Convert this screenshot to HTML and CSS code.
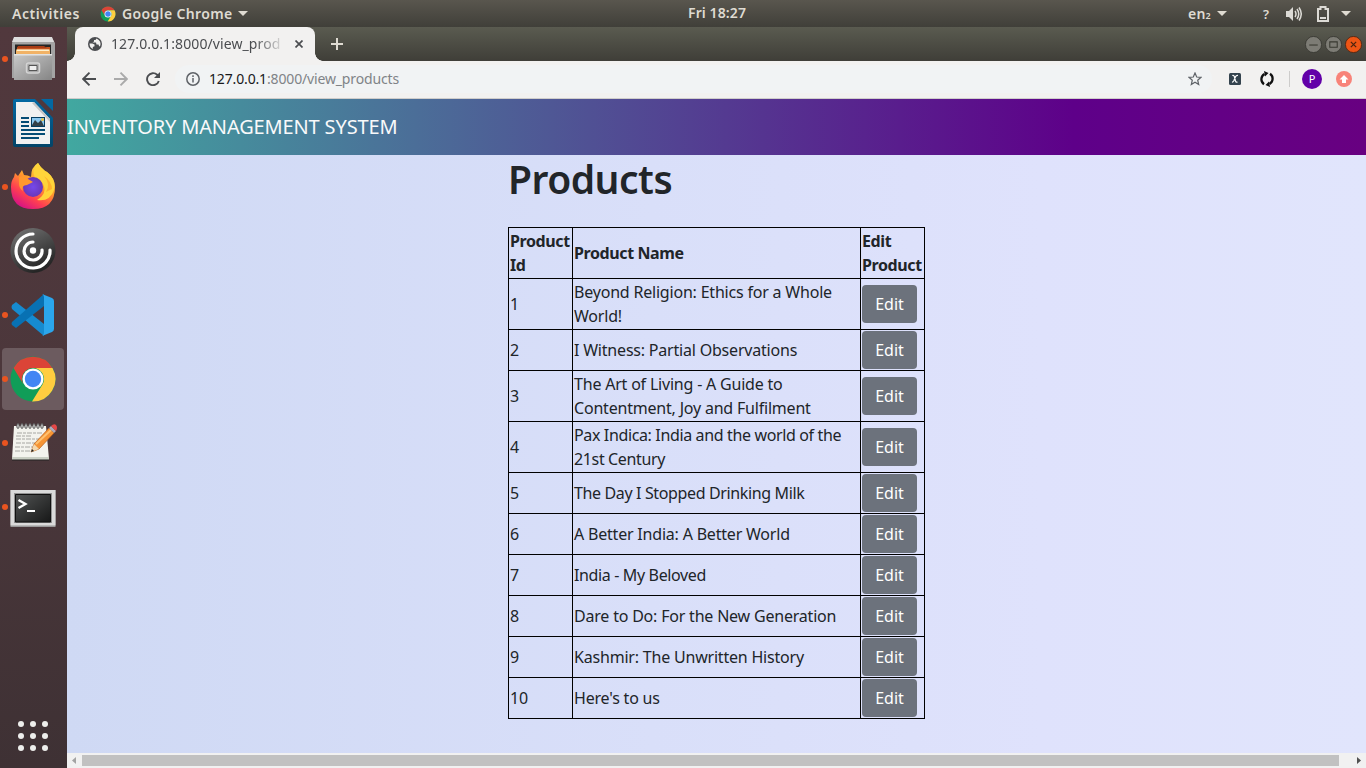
FILE: index.html
```html
<!DOCTYPE html>
<html lang="en">
<head>
<meta charset="utf-8">
<title>Products</title>
<link rel="stylesheet" href="styles.css">
</head>
<body>
<div class="topbar">
  <span class="activities">Activities</span>
  <svg class="app-icon" width="16" height="16" viewBox="0 0 48 48"><use href="#chrome"/></svg>
  <span class="app-name">Google Chrome</span>
  <i class="caret"></i>
  <span class="clock">Fri 18:27</span>
  <div class="tray">
    <span class="lang">en<span class="sub">2</span></span><i class="caret"></i>
    <span class="help">?</span>
    <svg class="volume" width="16" height="16" viewBox="0 0 16 16"><path d="M0 5h3l4-4v14l-4-4H0z" fill="#dcdad5"/><path d="M9 5q2 3 0 6M11 3q3.500 5 0 10M13 1.500q4.500 6.500 0 13" fill="none" stroke="#dcdad5" stroke-width="1.500"/></svg>
    <svg class="battery" width="12" height="16" viewBox="0 0 12 16"><path d="M1 3h2.500V1h5v2H11v12H1z" fill="none" stroke="#dcdad5" stroke-width="2"/><path d="M3 11h6v2H3z" fill="#dcdad5"/></svg>
    <i class="caret"></i>
  </div>
</div>
<div class="desktop">
  <nav class="dock">
    <div class="app running">
      <svg width="48" height="48" viewBox="0 0 48 48"><defs><linearGradient id="steel" x2="1" y2="1"><stop stop-color="#c9c9c9"/><stop offset="1" stop-color="#858585"/></linearGradient></defs><path d="M5 3h38l3 5v35H3V8z" fill="#a4a4a4"/><path d="M5 2h38l2 5H3z" fill="#dedede"/><path d="M6 9.500h36v10H6z" fill="#252525"/><path d="M8 12h33v7H8z" fill="#c3531f"/><path d="M9 11h26l3 2H8z" fill="#a83d16"/><path d="M7 14.500h34V19H7z" fill="#f1b266"/><path d="M8 14.500h32v1.500H8z" fill="#fff1cf"/><path d="M5 19h38v26H5z" fill="url(#steel)"/><path d="M5 19h38v1.500H5z" fill="#e2e2e2"/><rect x="17.500" y="28" width="13" height="10" rx="2" fill="#aaa" stroke="#d4d4d4" stroke-width="1.500"/><path d="M20 30.500h8v5h-8z" fill="#eee" stroke="#555"/></svg>
    </div>
    <div class="app">
      <svg width="48" height="48" viewBox="0 0 48 48"><defs><linearGradient id="writer" x2="0" y2="1"><stop stop-color="#0369a3"/><stop offset="1" stop-color="#024468"/></linearGradient></defs><path d="M6 0h20l18 19v27q0 2-2 2H6q-2 0-2-2V2q0-2 2-2z" fill="url(#writer)"/><path d="M7 3h18l16 17v25H7z" fill="#f1f1f1"/><path d="M25 3l16 17v3L23 4z" fill="#c5c5c5"/><path d="M32 0h12v12z" fill="#0369a3"/><path d="M12 19h8M12 23h8M12 27h8M12 31h24M12 35h24M12 39h18" stroke="#044c75" stroke-width="2"/><path d="M22 18h14v10H22z" fill="#063e61"/><path d="M23 19h12v8H23z" fill="#8cc8ef"/><path d="M23 26l3-5 3 3 3-3 3 6H23z" fill="#344047"/><circle cx="33.500" cy="20.500" r="1.500" fill="#e9c240"/></svg>
    </div>
    <div class="app running">
      <svg width="48" height="48" viewBox="0 1 48 48"><defs><linearGradient id="flame" x1=".85" y1=".1" x2=".3" y2="1"><stop stop-color="#ffef48"/><stop offset=".4" stop-color="#ff9d2b"/><stop offset=".72" stop-color="#ff4050"/><stop offset="1" stop-color="#d71384"/></linearGradient><radialGradient id="globe"><stop stop-color="#7548ec"/><stop offset="1" stop-color="#6938b8"/></radialGradient></defs><path d="M29 1q2 4 7 8l2 1q8 6 8 15 0 22-22 22T2 25q0-6 3-10l1-4 3 3 4-6 2 5q4 0 7 2 0-10 7-14z" fill="url(#flame)"/><path d="M29 1q2 4 7 8l2 1q9 7 7 18-4 12-17 10 11-7 6-16-3-5-8-6-4-7 3-15z" fill="#ffd43a"/><path d="M35 14q7 8 2 16l6-3q0-7-8-13z" fill="#ffb02d"/><circle cx="24" cy="25" r="10" fill="url(#globe)"/><path d="M10 15q6-3 9 2l5 3-6 3q-6 0-4 6-4-3-4-7z" fill="#ff982d"/></svg>
    </div>
    <div class="app">
      <svg width="48" height="48" viewBox="0 1 48 48"><defs><linearGradient id="disc" x2=".5" y2="1"><stop stop-color="#777"/><stop offset="1" stop-color="#252525"/></linearGradient></defs><circle cx="24" cy="24.500" r="22.500" fill="url(#disc)"/><g fill="none" stroke="#fff" stroke-width="3.200" stroke-linecap="round"><path d="M24 8a17 17 0 1 0 17 16"/><path d="M24 16a9 9 0 1 0 9 8"/></g><circle cx="24" cy="24.500" r="3.200" fill="#fff"/></svg>
    </div>
    <div class="app running">
      <svg width="48" height="48" viewBox="0 0 48 48"><path d="M3 14l4-3 28 22v12L3 18q-1-2 0-4z" fill="#168bd0"/><path d="M3 31q-1 2 0 3l4 3L35 15V3z" fill="#0871b3"/><path d="M33 3l10 4q2 1 2 3v28q0 2-2 3l-10 4q2-1 2-3V6q0-2-2-3z" fill="#2ba6ec"/></svg>
    </div>
    <div class="app running active">
      <svg width="48" height="48" viewBox="0 0 48 48"><g id="chrome"><circle cx="24" cy="24" r="22.500" fill="#109d58"/><path d="M4.500 13A22.500 22.500 0 0 1 43.500 13H24A11 11 0 0 0 14.500 29.500z" fill="#db4437"/><path d="M43.500 13A22.500 22.500 0 0 1 23 46.500l10.500-17A11 11 0 0 0 24 13z" fill="#ffcd40"/><circle cx="24" cy="24" r="10.500" fill="#fff"/><circle cx="24" cy="24" r="8.200" fill="#4285f4"/></g></svg>
    </div>
    <div class="app running">
      <svg width="48" height="48" viewBox="0 1 48 48"><path d="M5 8h32l3 33H3z" fill="#f3f3ee"/><path d="M3 39h37v3H3z" fill="#c9cec3"/><path d="M3 42h37" stroke="#222"/><path d="M8 15h26M7 18h16M7 21h23M7 25h25M6 29h18M6 33h15" stroke="#a6a6a2" stroke-dasharray="5 1 3 1"/><g fill="#ddd" stroke="#555"><ellipse cx="9" cy="8" rx="1.200" ry="2.500"/><ellipse cx="13" cy="8" rx="1.200" ry="2.500"/><ellipse cx="17" cy="8" rx="1.200" ry="2.500"/><ellipse cx="21" cy="8" rx="1.200" ry="2.500"/><ellipse cx="25" cy="8" rx="1.200" ry="2.500"/><ellipse cx="29" cy="8" rx="1.200" ry="2.500"/><ellipse cx="33" cy="8" rx="1.200" ry="2.500"/></g><path d="M22 34l3-8 15-16 5 5-15 16z" fill="#f59435" stroke="#b75f1a" stroke-width=".7"/><path d="M27 26l15-14" stroke="#ffc16f" stroke-width="2"/><path d="M22 34l3-8 5 5z" fill="#f3d9b0"/><path d="M22 34l1-3 2 2z" fill="#222"/><path d="M40 10l2-2 5 5-2 2z" fill="#aab"/><path d="M42 8q3-3 5-1t0 6z" fill="#e54848"/></svg>
    </div>
    <div class="app running">
      <svg width="48" height="48" viewBox="0 0 48 48"><defs><linearGradient id="screen" x2="1" y2="1"><stop stop-color="#515353"/><stop offset="1" stop-color="#171818"/></linearGradient></defs><path d="M1.500 7h45v37h-45z" fill="#999"/><path d="M1.500 7h45v35.500h-45z" fill="#dadada"/><path d="M5 10h38v30H5z" fill="#929292"/><path d="M6.500 11.500h35v27.500h-35z" fill="url(#screen)" stroke="#111"/><path d="M9.500 17l7 4-7 4" fill="none" stroke="#fff" stroke-width="2.300"/><path d="M18 28h8" stroke="#fff" stroke-width="2"/></svg>
    </div>
    <svg class="grid-icon" width="30" height="30" viewBox="0 0 30 30" fill="#eeeeec"><circle cx="3" cy="3" r="3"/><circle cx="15" cy="3" r="3"/><circle cx="27" cy="3" r="3"/><circle cx="3" cy="15" r="3"/><circle cx="15" cy="15" r="3"/><circle cx="27" cy="15" r="3"/><circle cx="3" cy="27" r="3"/><circle cx="15" cy="27" r="3"/><circle cx="27" cy="27" r="3"/></svg>
  </nav>
  <div class="browser">
    <header class="tabstrip">
      <div class="tab">
        <svg width="14" height="14" viewBox="0 0 14 14"><circle cx="7" cy="7" r="7" fill="#4b4d50"/><path d="M1.500 6.500h2.700l2.300 1v1.800l-1.700.7v2Q1.500 10.500 1.500 6.500zM8.500 1.600L7.500 3H6v1.500L4.500 5.500H8l.5 2h2l.5 1.500 1 .5Q14 4 8.500 1.600z" fill="#f2f1f0"/></svg>
        <span class="tab-title">127.0.0.1:8000/view_prod</span>
        <svg class="close" width="8" height="8" viewBox="0 0 8 8"><path d="M.5.500l7 7M7.500.500l-7 7" stroke="#4b4d50" stroke-width="1.700"/></svg>
      </div>
      <svg class="new-tab" width="12" height="12" viewBox="0 0 12 12"><path d="M6 0v12M0 6h12" stroke="#dfdbd2" stroke-width="2"/></svg>
      <div class="window-buttons">
        <svg width="17" height="17" viewBox="0 0 16 16"><circle cx="8" cy="8" r="7.600" fill="#7d7c75" stroke="#363630" stroke-width=".8"/><path d="M4 8.500h8" stroke="#383830"/></svg>
        <svg width="17" height="17" viewBox="0 0 16 16"><circle cx="8" cy="8" r="7.600" fill="#7d7c75" stroke="#363630" stroke-width=".8"/><path d="M4.500 5.500h7v5h-7z" fill="none" stroke="#383830"/></svg>
        <svg width="17" height="17" viewBox="0 0 16 16"><circle cx="8" cy="8" r="7.600" fill="#ed5515" stroke="#4f2411" stroke-width=".8"/><path d="M5.500 5.500l5 5M10.500 5.500l-5 5" stroke="#4b240f" stroke-width="1.200"/></svg>
      </div>
    </header>
    <div class="toolbar">
      <svg class="back" width="14" height="14" viewBox="0 0 14 14"><path d="M14 7H1.500M7.500.700L1.200 7l6.300 6.300" fill="none" stroke="#4b4d50" stroke-width="1.900"/></svg>
      <svg class="forward" width="14" height="14" viewBox="0 0 14 14"><path d="M0 7h12.500M6.500.700L12.800 7l-6.300 6.300" fill="none" stroke="#aaa" stroke-width="1.900"/></svg>
      <svg class="reload" width="14" height="14" viewBox="0 0 14 14"><path d="M12.800 9A6 6 0 1 1 11.200 2.800L12 3.600" fill="none" stroke="#4b4d50" stroke-width="1.900"/><path d="M14 0v6H8z" fill="#4b4d50"/></svg>
      <div class="address">
        <svg width="14" height="14" viewBox="0 0 14 14"><circle cx="7" cy="7" r="6.200" fill="none" stroke="#5f6368" stroke-width="1.500"/><path d="M7 6v4.500M7 3.300v1.600" stroke="#5f6368" stroke-width="1.500"/></svg>
        <span class="url">127.0.0.1<span class="path">:8000/view_products</span></span>
        <svg class="star" width="14" height="14" viewBox="0 0 14 14"><path d="M7 1l1.700 4 4.300.300-3.300 2.900 1 4.300L7 10.200l-3.700 2.300 1-4.300L1 5.300 5.300 5z" fill="none" stroke="#5f6368" stroke-width="1.200"/></svg>
      </div>
      <svg class="ext" width="12" height="12" viewBox="0 0 12 12"><rect width="12" height="12" rx="1.500" fill="#34434e"/><path d="M3.300 2.500q1.500-.5 2 1l1.200 4.500q.5 1.500 2 1M9 2.500q-1.500-.3-2.500 1.200L4.800 7.800Q4 9.200 3 9" fill="none" stroke="#fff" stroke-width="1.200"/></svg>
      <svg class="sync" width="14" height="16" viewBox="0 0 14 16"><path d="M4 13.200A6 6 0 0 1 4.500 3M10 2.800A6 6 0 0 1 9.500 13" fill="none" stroke="#111" stroke-width="2.300"/><path d="M4 0l4.500 2L5 5.500zM10 16l-4.500-2L9 10.500z" fill="#111"/></svg>
      <i class="divider"></i>
      <span class="avatar">P</span>
      <svg class="update" width="16" height="16" viewBox="0 0 16 16"><circle cx="8" cy="8" r="8" fill="#f88379"/><path d="M8 4l4.500 4.500H10V12H6V8.500H3.500z" fill="#fff"/></svg>
    </div>
    <main class="page">
      <div class="navbar">INVENTORY MANAGEMENT SYSTEM</div>
      <div class="content">
        <h1>Products</h1>
        <table>
          <colgroup><col class="col-id"><col class="col-name"><col class="col-edit"></colgroup>
          <tr class="tall"><th>Product<br>Id</th><th>Product Name</th><th>Edit<br>Product</th></tr>
          <tr class="tall"><td>1</td><td>Beyond Religion: Ethics for a Whole<br>World!</td><td><button>Edit</button></td></tr>
          <tr><td>2</td><td>I Witness: Partial Observations</td><td><button>Edit</button></td></tr>
          <tr class="tall"><td>3</td><td>The Art of Living - A Guide to<br>Contentment, Joy and Fulfilment</td><td><button>Edit</button></td></tr>
          <tr class="tall"><td>4</td><td class="snug">Pax Indica: India and the world of the<br>21st Century</td><td><button>Edit</button></td></tr>
          <tr><td>5</td><td class="snug">The Day I Stopped Drinking Milk</td><td><button>Edit</button></td></tr>
          <tr><td>6</td><td>A Better India: A Better World</td><td><button>Edit</button></td></tr>
          <tr><td>7</td><td class="snug">India - My Beloved</td><td><button>Edit</button></td></tr>
          <tr><td>8</td><td>Dare to Do: For the New Generation</td><td><button>Edit</button></td></tr>
          <tr><td>9</td><td>Kashmir: The Unwritten History</td><td><button>Edit</button></td></tr>
          <tr><td>10</td><td>Here's to us</td><td><button>Edit</button></td></tr>
        </table>
      </div>
    </main>
    <div class="scrollbar">
      <svg width="15" height="15" viewBox="0 0 15 15"><path d="M9 4v7L5 7.500z" fill="#a3a3a3"/></svg>
      <i class="thumb"></i>
      <svg class="right" width="15" height="15" viewBox="0 0 15 15"><path d="M6 4v7l4-3.500z" fill="#505050"/></svg>
    </div>
  </div>
</div>
</body>
</html>
```

FILE: styles.css
```css
* { box-sizing: border-box; }
body {
  margin: 0;
  width: 1366px;
  height: 768px;
  overflow: hidden;
  display: flex;
  flex-direction: column;
  font-family: "Noto Sans", "Open Sans", sans-serif;
}
svg { display: block; flex: none; }
.topbar {
  position: relative;
  height: 27px;
  flex: none;
  display: flex;
  align-items: center;
  padding-left: 12px;
  background: linear-gradient(#59564e, #403f39);
  color: #dfdbd2;
  font-size: 14px;
  font-weight: 600;
  white-space: nowrap;
}
.activities { width: 68px; letter-spacing: 0.55px; }
.app-icon { margin-left: 20px; }
.app-name { margin-left: 6px; width: 111px; letter-spacing: 0.35px; }
.caret {
  margin-left: 5px;
  border: 5px solid transparent;
  border-top-color: #dfdbd2;
  border-bottom: 0;
}
.clock { position: absolute; left: 688px; top: 3px; letter-spacing: 0.1px; }
.tray { margin-left: auto; padding-right: 15px; display: flex; align-items: center; }
.lang { width: 24px; letter-spacing: 0.2px; }
.sub { font-size: 9px; }
.help { margin-left: 36px; width: 9px; font-size: 13px; }
.volume { margin-left: 14px; }
.battery { margin-left: 15px; margin-right: 7px; }
.desktop { flex: 1; display: flex; min-height: 0; }
.dock {
  width: 67px;
  flex: none;
  display: flex;
  flex-direction: column;
  background: linear-gradient(#51383d, #4b373b 55%, #3e3134);
}
.app {
  position: relative;
  height: 64px;
  display: flex;
  align-items: center;
  justify-content: center;
}
.running::before {
  content: "";
  position: absolute;
  left: 2px;
  top: 29px;
  width: 6px;
  height: 6px;
  border-radius: 50%;
  background: #e95420;
  z-index: 1;
}
.active::after {
  content: "";
  position: absolute;
  left: 2px;
  top: 1px;
  width: 62px;
  height: 62px;
  border-radius: 4px;
  background: #6c5b5f;
}
.app svg { position: relative; z-index: 1; margin-right: 1px; }
.grid-icon { margin: auto auto 17px 18px; }
.browser { flex: 1; min-width: 0; display: flex; flex-direction: column; }
.tabstrip {
  height: 34px;
  flex: none;
  display: flex;
  align-items: center;
  padding: 0 4px 0 8px;
  background: linear-gradient(#5a5b50, #3f3e38);
}
.tab {
  position: relative;
  width: 240px;
  height: 34px;
  display: flex;
  align-items: center;
  padding: 0 12px 0 13px;
  border-radius: 8px 8px 0 0;
  background: #f2f1f0;
}
.tab::before, .tab::after {
  content: "";
  position: absolute;
  bottom: 0;
  width: 8px;
  height: 8px;
  background: radial-gradient(circle at 0 0, transparent 7.5px, #f2f1f0 8px);
}
.tab::before { left: -8px; }
.tab::after { right: -8px; transform: scaleX(-1); }
.tab-title {
  width: 175px;
  margin-left: 9px;
  padding-bottom: 2px;
  white-space: nowrap;
  font-size: 14px;
  letter-spacing: 0.1px;
  color: #4b4d50;
  -webkit-mask-image: linear-gradient(90deg, #000 82%, transparent);
  mask-image: linear-gradient(90deg, #000 82%, transparent);
}
.close { margin-left: 9px; }
.new-tab { margin-left: 16px; }
.window-buttons { display: flex; gap: 3px; margin-left: auto; }
.toolbar {
  height: 38px;
  flex: none;
  display: flex;
  align-items: center;
  padding: 0 14px 1px 15px;
  background: #f2f1f0;
  border-bottom: 1px solid #cfcdcb;
}
.forward { margin-left: 18px; }
.reload { margin-left: 18px; }
.address {
  height: 28px;
  width: 1037px;
  flex: none;
  margin-left: 15px;
  display: flex;
  align-items: center;
  padding: 0 10px 0 11px;
  border-radius: 14px;
  background: #f1f3f4;
}
.url { margin-left: 9px; padding-bottom: 2px; font-size: 14px; color: #18191b; letter-spacing: -0.15px; }
.path { color: #808387; }
.star { margin-left: auto; }
.ext { margin-left: 17px; }
.sync { margin-left: 19px; }
.divider { width: 1px; height: 16px; margin-left: 15px; background: #cdcccb; }
.avatar {
  width: 20px;
  height: 20px;
  margin-left: 12px;
  border-radius: 50%;
  background: #6200a8;
  color: #fff;
  font-size: 11px;
  line-height: 20px;
  text-align: center;
}
.update { margin-left: 14px; }
.page {
  flex: 1;
  min-height: 0;
  overflow: hidden;
  background: linear-gradient(90deg, #cfd9f4, #d9dff9 45%, #dfe2fc 75%, #e1e5fc);
}
.navbar {
  height: 56px;
  line-height: 56px;
  font-size: 20px;
  letter-spacing: -0.14px;
  color: #f8f9fa;
  white-space: nowrap;
  background: linear-gradient(90deg, #41a8a0, #5e0089 77.500%, #680081);
}
.content { margin-left: 441px; width: 417px; color: #212529; }
h1 {
  margin: 0 0 24px;
  height: 48px;
  line-height: 48px;
  font-size: 39px;
  font-weight: 600;
  letter-spacing: -0.5px;
}
table {
  width: 417px;
  table-layout: fixed;
  border-collapse: collapse;
  font-size: 16px;
  line-height: 24px;
  letter-spacing: -0.2px;
  white-space: nowrap;
}
.col-id { width: 64px; }
.col-name { width: 288px; }
.col-edit { width: 64px; }
tr { height: 41px; }
.tall { height: 51px; }
th, td { padding: 1px; border: 1px solid #000; text-align: left; }
th { font-weight: 700; letter-spacing: -0.4px; }
.snug { letter-spacing: -0.36px; }
button {
  display: block;
  width: 55px;
  height: 38px;
  padding: 0;
  border: 0;
  border-radius: 4px;
  background: #6c727c;
  color: #fff;
  font: 16px/24px "Noto Sans", sans-serif;
}
.scrollbar { height: 15px; flex: none; display: flex; align-items: center; background: #f1f1f1; }
.thumb { width: 1257px; height: 11px; background: #c1c1c1; }
.right { margin-left: auto; }
```
